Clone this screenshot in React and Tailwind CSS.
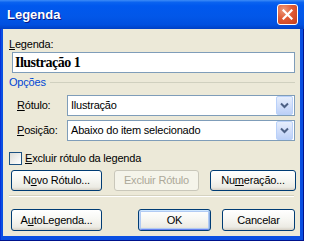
import React from 'react'

const FONT = { fontFamily: '"Liberation Sans", Arial, sans-serif' }

function Btn({ children, w, disabled, isDefault }) {
  const base =
    'h-full flex items-center justify-center rounded-[3px] text-[11px] tracking-[-0.2px] border '
  if (disabled) {
    return (
      <div
        className={base + 'border-[#c9c7ba] bg-[#f5f4ea] text-[#aca899]'}
        style={{ width: w }}
      >
        {children}
      </div>
    )
  }
  return (
    <div
      className={
        base +
        'border-[#003c74] text-black bg-[linear-gradient(180deg,#ffffff_0%,#f7f7f3_45%,#ecebe4_85%,#d6d0c5_100%)] ' +
        (isDefault
          ? 'shadow-[inset_0_1px_0_#cee7ff,inset_1px_0_0_#bcd4f6,inset_-1px_0_0_#89ade4,inset_0_-1px_0_#6982ee,inset_0_0_0_2px_#b2cbf3]'
          : '')
      }
      style={{ width: w }}
    >
      {children}
    </div>
  )
}

function Combo({ value }) {
  return (
    <div className="flex-1 h-full bg-white border border-[#7f9db9] flex items-center">
      <span className="flex-1 pl-[3px] text-[11px] tracking-[-0.2px]">{value}</span>
      <div className="w-[17px] h-[19px] mr-[1px] rounded-[2px] border border-[#b9d1fa] bg-[linear-gradient(180deg,#e6eefc_0%,#d2dffa_50%,#bcd0f7_100%)] flex items-center justify-center">
        <svg width="9" height="7" viewBox="0 0 9 7">
          <path d="M1 1.5 L4.5 5 L8 1.5" fill="none" stroke="#4d6185" strokeWidth="2" />
        </svg>
      </div>
    </div>
  )
}

export default function App() {
  return (
    <div className="w-[304px] h-[241px] flex flex-col bg-[#0a4fe2] shadow-[inset_-1px_-1px_0_#00138c,inset_1px_0_0_#0831d9] select-none" style={FONT}>
      <div className="h-[29px] shrink-0 flex items-center pl-[7px] pr-[6px] bg-[linear-gradient(180deg,#3d8cf7_0%,#0a63f0_8%,#0058ee_20%,#0257e9_55%,#0050e0_85%,#0040c4_100%)]">
        <span className="flex-1 text-white font-bold text-[13px] [text-shadow:1px_1px_0_#0a1883]">Legenda</span>
        <div className="w-[21px] h-[21px] rounded-[3px] border border-white bg-[radial-gradient(circle_at_30%_25%,#ec9a7c_0%,#e05a35_45%,#c23d1c_100%)] flex items-center justify-center">
          <svg width="11" height="11" viewBox="0 0 11 11">
            <path d="M1.5 1.5 L9.5 9.5 M9.5 1.5 L1.5 9.5" stroke="white" strokeWidth="2.2" strokeLinecap="square" />
          </svg>
        </div>
      </div>
      <div className="flex-1 ml-[3px] mr-[4px] mb-[5px] bg-[#ece9d8] flex flex-col text-[11px] text-black tracking-[-0.2px]">
        <div className="mt-[9px] h-[13px] leading-[13px] pl-[6px]">
          <u>L</u>egenda:
        </div>
        <div className="mt-[1px] ml-[9px] mr-[5px] h-[21px] bg-white border border-[#7f9db9] flex items-center pl-[2px]">
          <span
            className="font-bold text-[14px] tracking-[-0.5px]"
            style={{ fontFamily: '"Liberation Serif", "Times New Roman", serif' }}
          >
            Ilustração 1
          </span>
        </div>
        <div className="mt-[3px] h-[13px] flex items-center pl-[6px] pr-[5px]">
          <span className="text-[#0046d5] leading-[13px]">Opções</span>
          <div className="flex-1 ml-[4px] h-px bg-[#d0d0bf]" />
        </div>
        <div className="mt-[6px] h-[21px] flex items-center pl-[14px] pr-[5px]">
          <span className="w-[50px]">
            <u>R</u>ótulo:
          </span>
          <Combo value="Ilustração" />
        </div>
        <div className="mt-[4px] h-[21px] flex items-center pl-[14px] pr-[5px]">
          <span className="w-[50px]">
            <u>P</u>osição:
          </span>
          <Combo value="Abaixo do item selecionado" />
        </div>
        <div className="mt-[11px] h-[13px] flex items-center pl-[6px]">
          <div className="w-[13px] h-[13px] border border-[#1c5180] bg-[linear-gradient(135deg,#dcdcd7_0%,#f6f6f4_70%,#ffffff_100%)]" />
          <span className="ml-[3px] leading-[13px]">
            <u>E</u>xcluir rótulo da legenda
          </span>
        </div>
        <div className="mt-[5px] h-[21px] flex pl-[8px]">
          <Btn w={91}>
            N<u>o</u>vo Rótulo...
          </Btn>
          <div className="w-[12px]" />
          <Btn w={85} disabled>
            Excluir Rótulo
          </Btn>
          <div className="w-[11px]" />
          <Btn w={86}>
            Nu<u>m</u>eração...
          </Btn>
        </div>
        <div className="mt-[4px] mx-[6px] h-[2px] border-t border-[#d5d2c0] border-b border-b-white" />
        <div className="mt-[12px] h-[22px] flex pl-[8px]">
          <Btn w={91}>
            A<u>u</u>toLegenda...
          </Btn>
          <div className="w-[36px]" />
          <Btn w={73} isDefault>
            OK
          </Btn>
          <div className="w-[11px]" />
          <Btn w={73}>Cancelar</Btn>
        </div>
      </div>
    </div>
  )
}
